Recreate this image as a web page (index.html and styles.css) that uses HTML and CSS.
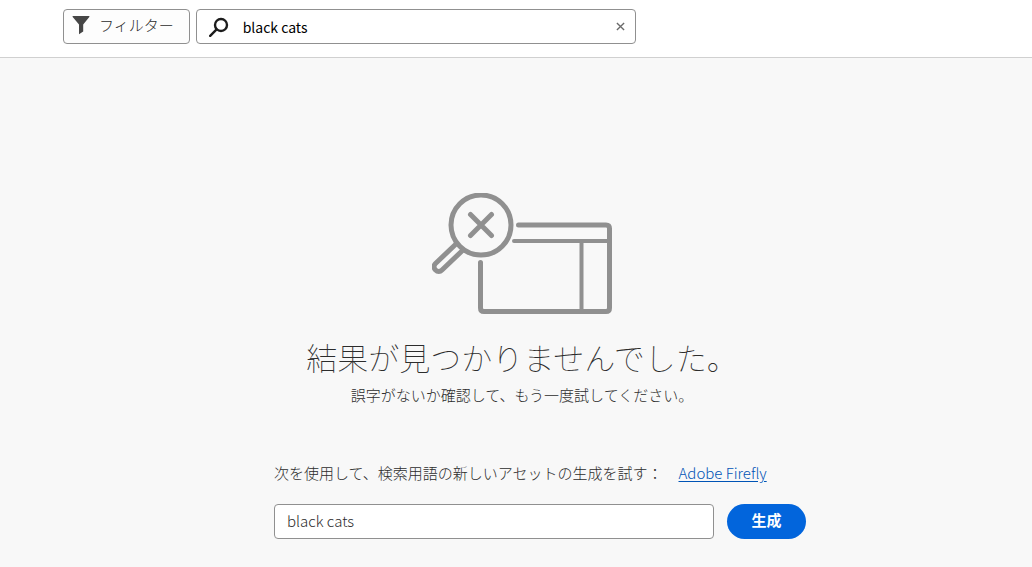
FILE: index.html
```html
<!DOCTYPE html>
<html lang="ja">
<head>
<meta charset="utf-8">
<meta name="viewport" content="width=device-width, initial-scale=1">
<title>検索結果</title>
<link rel="stylesheet" href="styles.css">
</head>
<body>
<header class="toolbar">
  <button class="filter" type="button">
    <svg class="filter-icon" viewBox="0 0 18 20" aria-hidden="true"><path d="M1.2 1h15.6c.6 0 .9.7.5 1.1L11.2 9.500v7L7 19.200V9.500L.7 2.100C.3 1.700.6 1 1.200 1z"/></svg>
    <span>フィルター</span>
  </button>
  <form class="search" role="search">
    <svg class="search-icon" viewBox="0 0 20 20" aria-hidden="true"><circle cx="12" cy="8" r="6"/><path d="M7.6 12.4 1.2 18.8"/></svg>
    <input class="search-input" type="text" value="black cats" aria-label="検索">
    <button class="clear" type="button" aria-label="クリア"><svg class="clear-icon" viewBox="0 0 8 8" aria-hidden="true"><path d="m.8.8 6.4 6.4M7.2.8.8 7.2"/></svg></button>
  </form>
</header>
<main class="results">
  <section class="empty">
    <svg class="empty-art" viewBox="0 0 180 122" aria-hidden="true">
      <circle class="thick" cx="49" cy="32" r="30"/>
      <path class="thick" d="m38.5 21.5 21 21m0-21-21 21M86.500 32H174q3.500 0 3.500 3.500V115q0 3.500-3.500 3.500H52q-3.500 0-3.500-3.500V69.500"/>
      <path class="thin" d="M82 48h94M149.500 49v69"/>
      <path class="thick" d="M24 51 3.500 70.500c-2 2-2 4.500 0 6.500s4.500 2 6.500 0L31 57"/>
    </svg>
    <h1 class="title">結果が見つかりませんでした。</h1>
    <p class="hint">誤字がないか確認して、もう一度試してください。</p>
  </section>
  <form class="generate">
    <p class="prompt"><label for="prompt">次を使用して、検索用語の新しいアセットの生成を試す：</label><a class="link" href="#">Adobe Firefly</a></p>
    <div class="row">
      <input class="prompt-input" id="prompt" type="text" value="black cats">
      <button class="submit" type="button">生成</button>
    </div>
  </form>
</main>
</body>
</html>
```
FILE: styles.css
```css
* { box-sizing: border-box; }
body {
  margin: 0;
  min-height: 100vh;
  background: #f8f8f8;
  color: #2c2c2c;
  font: 300 15px/20px "Noto Sans CJK JP", sans-serif;
}
button, input { font: inherit; color: inherit; }
h1, p { margin: 0; }
.toolbar {
  display: flex;
  gap: 6px;
  padding: 9px 63px 13px;
  background: #fff;
  border-bottom: 1px solid #d0d0d0;
}
.filter {
  display: flex;
  align-items: center;
  gap: 9px;
  height: 35px;
  padding: 0 15px 3px 8px;
  border: 1px solid #909090;
  border-radius: 4px;
  background: #fdfdfd;
}
.filter-icon { width: 18px; height: 20px; fill: #464646; }
.search {
  display: flex;
  align-items: center;
  flex: 0 1 440px;
  height: 35px;
  padding: 0 10px 0 12px;
  border: 1px solid #909090;
  border-radius: 4px;
  background: #fff;
}
.search-icon {
  flex: none;
  width: 20px;
  height: 20px;
  fill: none;
  stroke: #1c1c1c;
  stroke-width: 2.4;
  stroke-linecap: round;
}
.search-input {
  flex: 1;
  min-width: 0;
  padding: 0 14px;
  border: 0;
  background: none;
  color: #000;
  font-size: 14px;
  font-weight: 400;
}
.clear { display: flex; padding: 0; border: 0; background: none; }
.clear-icon { width: 9px; height: 9px; fill: none; stroke: #6a6a6a; stroke-width: 1.2; }
.results {
  display: flex;
  flex-direction: column;
  align-items: center;
  padding: 135px 20px 28px 32px;
}
.empty { display: flex; flex-direction: column; align-items: center; }
.empty-art { width: 180px; height: 122px; fill: none; stroke: #909090; stroke-linecap: round; }
.thick { stroke-width: 5; }
.thin { stroke-width: 4; }
.title { margin-top: 22px; font-size: 31px; font-weight: 100; line-height: 40px; }
.hint { margin-top: 8px; }
.generate { width: 100%; max-width: 532px; margin: 58px 0 0 36px; }
.prompt { display: flex; flex-wrap: wrap; gap: 16px; }
.link { color: #0054b6; text-underline-offset: 2px; }
.row { display: flex; gap: 13px; margin-top: 21px; }
.prompt-input {
  flex: 1;
  min-width: 0;
  height: 35px;
  padding: 0 12px 2px;
  border: 1px solid #909090;
  border-radius: 4px;
  background: #fff;
}
.submit {
  width: 79px;
  height: 35px;
  padding: 0 0 3px;
  border: 0;
  border-radius: 18px;
  background: #0265dc;
  color: #fff;
  font-weight: 700;
}
```
